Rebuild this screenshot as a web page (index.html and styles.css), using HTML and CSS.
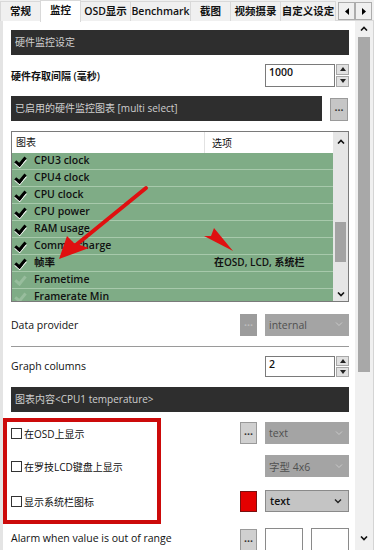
FILE: index.html
```html
<!DOCTYPE html>
<html>
<head>
<title>监控</title>
<link rel="stylesheet" href="styles.css">
</head>
<body>
<div class="tabs">
   <div class="tab w40">常规</div>
   <div class="tab w40 active">监控</div>
   <div class="tab w50">OSD显示</div>
   <div class="tab w60">Benchmark</div>
   <div class="tab w40">截图</div>
   <div class="tab w50">视频摄录</div>
   <div class="tab w55">自定义设定</div>
   <div class="tabNav">
      <span class="navBtn"><svg width="6" height="7" viewBox="0 0 6 7"><path d="M5 0 L1 3.5 L5 7 Z" fill="#000"/></svg></span>
      <span class="navBtn"><svg width="6" height="7" viewBox="0 0 6 7"><path d="M1 0 L5 3.5 L1 7 Z" fill="#000"/></svg></span>
   </div>
</div>

<div class="window">
   <div class="panel">
      <div class="section">硬件监控设定</div>

      <div class="row rowInterval">
         <span class="label">硬件存取间隔 (毫秒)</span>
         <div class="spin">
            <span class="spinValue">1000</span>
            <div class="spinBtns">
               <span class="spinBtn"><svg width="6" height="4" viewBox="0 0 6 4"><path d="M0 4 L3 0 L6 4 Z" fill="#222"/></svg></span>
               <span class="spinBtn"><svg width="6" height="4" viewBox="0 0 6 4"><path d="M0 0 L3 4 L6 0 Z" fill="#222"/></svg></span>
            </div>
         </div>
      </div>

      <div class="sectionRow">
         <div class="section sectionWide">已启用的硬件监控图表 [multi select]</div>
         <span class="dotsBtn dotsLight">...</span>
      </div>

      <div class="list">
         <div class="listBody">
            <div class="listHead">
               <span class="colName">图表</span>
               <span class="colOpt">选项</span>
            </div>
            <div class="listRow"><span class="check on"></span><span class="colName">CPU3 clock</span></div>
            <div class="listRow"><span class="check on"></span><span class="colName">CPU4 clock</span></div>
            <div class="listRow"><span class="check on"></span><span class="colName">CPU clock</span></div>
            <div class="listRow"><span class="check on"></span><span class="colName">CPU power</span></div>
            <div class="listRow"><span class="check on"></span><span class="colName">RAM usage</span></div>
            <div class="listRow"><span class="check on"></span><span class="colName">Commit charge</span></div>
            <div class="listRow"><span class="check on"></span><span class="colName">帧率</span><span class="colOpt">在OSD, LCD, 系统栏</span></div>
            <div class="listRow"><span class="check off"></span><span class="colName">Frametime</span></div>
            <div class="listRow"><span class="check off"></span><span class="colName">Framerate Min</span></div>
         </div>
         <div class="listScroll">
            <svg class="chev" width="8" height="5" viewBox="0 0 8 5"><path d="M1 4.5 L4 1.5 L7 4.5" stroke="#111" stroke-width="1.6" fill="none"/></svg>
            <div class="listThumb"></div>
            <svg class="chev" width="8" height="5" viewBox="0 0 8 5"><path d="M1 0.5 L4 3.5 L7 0.5" stroke="#111" stroke-width="1.6" fill="none"/></svg>
         </div>
      </div>

      <div class="row rowProvider">
         <span class="label">Data provider</span>
         <span class="dotsBtn dotsDisabled">...</span>
         <div class="combo comboDisabled"><span>internal</span><svg width="8" height="5" viewBox="0 0 8 5"><path d="M1 0.5 L4 3.5 L7 0.5" stroke="#c8c8c8" stroke-width="1" fill="none"/></svg></div>
      </div>

      <div class="separator"></div>

      <div class="row rowColumns">
         <span class="label">Graph columns</span>
         <div class="spin">
            <span class="spinValue">2</span>
            <div class="spinBtns">
               <span class="spinBtn"><svg width="6" height="4" viewBox="0 0 6 4"><path d="M0 4 L3 0 L6 4 Z" fill="#222"/></svg></span>
               <span class="spinBtn"><svg width="6" height="4" viewBox="0 0 6 4"><path d="M0 0 L3 4 L6 0 Z" fill="#222"/></svg></span>
            </div>
         </div>
      </div>

      <div class="section sectionGraph">图表内容&lt;CPU1 temperature&gt;</div>

      <div class="row rowOsd">
         <label class="label cjk"><span class="box"></span>在OSD上显示</label>
         <span class="dotsBtn dotsLight">...</span>
         <div class="combo comboDisabled"><span>text</span><svg width="8" height="5" viewBox="0 0 8 5"><path d="M1 0.5 L4 3.5 L7 0.5" stroke="#c8c8c8" stroke-width="1" fill="none"/></svg></div>
      </div>

      <div class="row rowLcd">
         <label class="label cjk"><span class="box"></span>在罗技LCD键盘上显示</label>
         <div class="combo comboDisabled"><span>字型 4x6</span><svg width="8" height="5" viewBox="0 0 8 5"><path d="M1 0.5 L4 3.5 L7 0.5" stroke="#c8c8c8" stroke-width="1" fill="none"/></svg></div>
      </div>

      <div class="row rowTray">
         <label class="label cjk"><span class="box"></span>显示系统栏图标</label>
         <span class="swatch"></span>
         <div class="combo comboActive"><span>text</span><svg width="8" height="5" viewBox="0 0 8 5"><path d="M1 0.5 L4 3.5 L7 0.5" stroke="#222" stroke-width="1.4" fill="none"/></svg></div>
      </div>

      <div class="row rowAlarm">
         <span class="label">Alarm when value is out of range</span>
         <span class="dotsBtn dotsLight">...</span>
         <div class="limits"><span class="limitBox"></span><span class="limitBox"></span></div>
      </div>
   </div>

   <div class="vscroll">
      <svg class="chev" width="8" height="5" viewBox="0 0 8 5"><path d="M1 4.5 L4 1.5 L7 4.5" stroke="#111" stroke-width="1.6" fill="none"/></svg>
      <div class="vthumb"></div>
      <div class="vtrack"></div>
      <svg class="chev" width="8" height="5" viewBox="0 0 8 5"><path d="M1 0.5 L4 3.5 L7 0.5" stroke="#111" stroke-width="1.6" fill="none"/></svg>
   </div>
</div>

<!-- red annotations over the screenshot -->
<div class="redBox"></div>
<svg class="annot" width="374" height="550" viewBox="0 0 374 550">
   <path d="M146 188 L76 245" stroke="#e01010" stroke-width="4" stroke-linecap="round"/>
   <path d="M59 259 L67 236 L74 243 L89 248 Z" fill="#e01010"/>
   <path d="M233 251 L214 228 L211 236 L204 236 Z" fill="#e01010"/>
</svg>
</body>
</html>
```
FILE: styles.css
```css
*
{
    box-sizing: border-box;
}

body
{
    margin: 0;
    width: 374px;
    height: 550px;
    overflow: hidden;
    position: relative;
    background: #f0f0f0;
    color: #111;
    font-family: "Open Sans", "Noto Sans CJK SC", sans-serif;
    font-size: 10.5px;
}

/* tab strip */
.tabs
{
    display: flex;
    height: 21px;
    border-bottom: 1px solid #d9d9d9;
    background: #f0f0f0;
}

.tab
{
    height: 20px;
    margin-top: 1px;
    margin-right: -1px;
    border: 1px solid #d9d9d9;
    border-bottom: none;
    text-align: center;
    line-height: 18px;
    font-weight: 600;
    white-space: nowrap;
    background: #f0f0f0;
}
.w40 { width: 41px; }
.w50 { width: 51px; }
.w55 { width: 56px; }
.w60 { width: 61px; }

.tab.active
{
    height: 22px;
    margin-top: 0;
    background: #fff;
    position: relative;
    z-index: 1;
}

.tabNav
{
    display: flex;
    margin-left: 3px;
    padding-top: 2px;
}

.navBtn
{
    width: 17px;
    height: 18px;
    border: 1px solid #adadad;
    background: #f0f0f0;
    display: flex;
    align-items: center;
    justify-content: center;
}

/* main area */
.window
{
    display: flex;
    height: 529px;
}

.panel
{
    flex: 1;
    background: #fff;
    border-left: 3px solid #e4e4e4;
    padding: 9px 6px 0 8px;
    display: flex;
    flex-direction: column;
}

.section
{
    height: 25px;
    background: #2e2e2e;
    color: #cfcfcf;
    padding-left: 4px;
    line-height: 25px;
    font-size: 10px;
}

.sectionRow
{
    display: flex;
    margin-top: 9px;
    gap: 8px;
}
.sectionWide
{
    width: 311px;
}

.row
{
    display: flex;
    align-items: center;
}
.label
{
    flex: 1;
    white-space: nowrap;
}
.rowInterval { margin-top: 9px; height: 25px; }
.rowInterval .label { font-weight: 600; font-size: 10px; }
.rowProvider { margin-top: 12px; height: 22px; }
.rowColumns { margin-top: 9px; height: 23px; }
.rowOsd { margin-top: 10px; height: 22px; }
.rowLcd { margin-top: 11px; height: 22px; }
.rowTray { margin-top: 13px; height: 22px; }
.rowAlarm { margin-top: 14px; height: 24px; }

.sectionGraph
{
    margin-top: 10px;
}

.separator
{
    margin-top: 10px;
    height: 1px;
    background: #9a9a9a;
}

/* spin boxes */
.spin
{
    width: 84px;
    height: 100%;
    display: flex;
}
.spinValue
{
    flex: 1;
    border: 1px solid #7a7a7a;
    padding: 0 3px;
    line-height: 15px;
    font-weight: 600;
}
.spinBtns
{
    width: 14px;
    display: flex;
    flex-direction: column;
    gap: 1px;
    padding-left: 1px;
}
.spinBtn
{
    flex: 1;
    border: 1px solid #a8a8a8;
    background: #e1e1e1;
    display: flex;
    align-items: center;
    justify-content: center;
}

/* buttons and combos */
.dotsBtn
{
    width: 17px;
    height: 22px;
    margin-right: 8px;
    text-align: center;
    line-height: 16px;
    font-weight: 700;
    color: #333;
}
.dotsLight
{
    background: #d0d0d0;
    border: 1px solid #9a9a9a;
}
.sectionRow .dotsLight
{
    width: 18px;
    height: 23px;
    margin: 2px 0 0 0;
    background: #c6c6c6;
}
.dotsDisabled
{
    background: #9c9c9c;
    color: #bdbdbd;
}

.combo
{
    width: 84px;
    height: 22px;
    display: flex;
    align-items: center;
    justify-content: space-between;
    padding: 0 6px 0 4px;
}
.comboDisabled
{
    background: #a4a4a4;
    color: #505050;
}
.comboActive
{
    background: #c4c4c4;
    border: 1px solid #8a8a8a;
    font-weight: 600;
}

.swatch
{
    width: 17px;
    height: 21px;
    margin-right: 8px;
    background: #e40000;
    border: 1px solid #7a1010;
}

.limits
{
    width: 84px;
    height: 100%;
    display: flex;
    justify-content: space-between;
    align-self: flex-start;
    margin-top: 2px;
}
.limitBox
{
    width: 38px;
    height: 26px;
    border: 1px solid #8a8a8a;
    background: #fff;
}
.rowAlarm .dotsBtn
{
    margin-top: 4px;
}

/* check boxes */
.cjk
{
    display: flex;
    align-items: center;
    font-size: 10px;
}
.box
{
    width: 11px;
    height: 11px;
    border: 1px solid #333;
    margin-right: 2px;
    background: #fff;
}

/* chart list */
.list
{
    margin-top: 10px;
    height: 171px;
    border: 1px solid #7a7a7a;
    display: flex;
}
.listBody
{
    flex: 1;
    overflow: hidden;
}
.listHead
{
    height: 21px;
    display: flex;
    align-items: center;
    background: #fff;
    font-size: 10px;
}
.listHead .colName
{
    width: 193px;
    padding-left: 4px;
    border-right: 1px solid #e2e2e2;
    line-height: 21px;
}
.listHead .colOpt
{
    padding-left: 7px;
}
.listRow
{
    height: 17px;
    padding-bottom: 1px;
    display: flex;
    align-items: center;
    background: #7fac86;
    border-bottom: 1px solid #a7c9ab;
    font-weight: 600;
    line-height: 14px;
}
.listRow .colName
{
    width: 181px;
    padding-left: 8px;
}
.listRow .colOpt
{
    padding-left: 7px;
    font-size: 10px;
}
.check
{
    width: 12px;
    height: 11px;
    margin-left: 2px;
    position: relative;
}
.check::after
{
    content: "";
    position: absolute;
    left: 3px;
    top: 0;
    width: 4px;
    height: 8px;
    border-right: 3px solid #000;
    border-bottom: 3px solid #000;
    transform: rotate(40deg);
    box-shadow: 1px 1px 0 #fff;
}
.check.off::after
{
    border-color: #98bd9d;
    box-shadow: none;
}

.listScroll
{
    width: 15px;
    background: #e6e6e6;
    display: flex;
    flex-direction: column;
    align-items: center;
    padding: 7px 0 4px;
}
.listThumb
{
    width: 11px;
    height: 40px;
    margin-top: 78px;
    margin-bottom: auto;
    background: #a3a3a3;
}

/* window scroll bar */
.vscroll
{
    width: 19px;
    background: #f0f0f0;
    display: flex;
    flex-direction: column;
    align-items: center;
    padding: 5px 0 9px;
    border-right: 1px solid #d4d4d4;
}
.vthumb
{
    width: 12px;
    height: 335px;
    margin-top: 6px;
    background: #a8a8a8;
}
.vtrack
{
    flex: 1;
}

/* annotations */
.redBox
{
    position: absolute;
    left: 3px;
    top: 418px;
    width: 158px;
    height: 106px;
    border: 4px solid #cc0a0a;
}
.annot
{
    position: absolute;
    left: 0;
    top: 0;
}
```
